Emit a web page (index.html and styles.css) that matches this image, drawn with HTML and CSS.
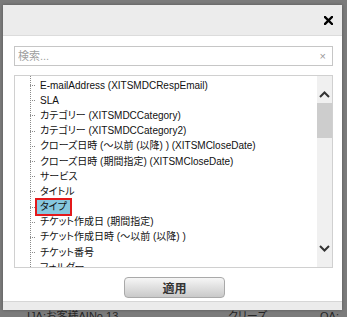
FILE: index.html
```html
<!DOCTYPE html>
<html lang="ja">
<head>
    <meta charset="UTF-8">
    <meta name="viewport" content="width=device-width, initial-scale=1.0">
    <title>フィールド選択</title>
    <link rel="stylesheet" href="styles.css">
</head>
<body>

    <!-- page behind the overlay -->
    <div class="backdrop">
        <span class="bg-cell bg-a">IJA:お客様AINo.13</span>
        <span class="bg-cell bg-b">クリーズ</span>
        <span class="bg-cell bg-c">OA:客</span>
    </div>

    <div class="dialog">
        <div class="dialog-header">
            <button class="close-btn" title="閉じる">
                <svg width="9" height="9" viewBox="0 0 9 9">
                    <path d="M1 1 L8 8 M8 1 L1 8" stroke="#000" stroke-width="2.4" stroke-linecap="square"/>
                </svg>
            </button>
        </div>

        <div class="dialog-body">
            <div class="search-box">
                <input type="text" placeholder="検索...">
                <span class="search-clear">×</span>
            </div>

            <div class="field-list">
                <ul class="tree">
                    <li><span class="label">E-mailAddress (XITSMDCRespEmail)</span></li>
                    <li><span class="label">SLA</span></li>
                    <li><span class="label">カテゴリー (XITSMDCCategory)</span></li>
                    <li><span class="label">カテゴリー (XITSMDCCategory2)</span></li>
                    <li><span class="label">クローズ日時 (～以前 (以降) ) (XITSMCloseDate)</span></li>
                    <li><span class="label">クローズ日時 (期間指定) (XITSMCloseDate)</span></li>
                    <li><span class="label">サービス</span></li>
                    <li><span class="label">タイトル</span></li>
                    <li class="selected"><span class="label">タイプ</span></li>
                    <li><span class="label">チケット作成日 (期間指定)</span></li>
                    <li><span class="label">チケット作成日時 (～以前 (以降) )</span></li>
                    <li><span class="label">チケット番号</span></li>
                    <li><span class="label">フォルダー</span></li>
                </ul>
                <div class="scrollbar">
                    <span class="scroll-arrow">
                        <svg width="11" height="7" viewBox="0 0 11 7"><path d="M1 6 L5.5 1.5 L10 6" fill="none" stroke="#333" stroke-width="2"/></svg>
                    </span>
                    <span class="scroll-thumb"></span>
                    <span class="scroll-space"></span>
                    <span class="scroll-arrow">
                        <svg width="11" height="7" viewBox="0 0 11 7"><path d="M1 1 L5.5 5.5 L10 1" fill="none" stroke="#333" stroke-width="2"/></svg>
                    </span>
                </div>
            </div>

            <div class="actions">
                <button class="apply-btn">適用</button>
            </div>
        </div>

        <div class="dialog-footer"></div>
    </div>

</body>
</html>
```

FILE: styles.css
```css
/* General Styles */
body {
    font-family: "Liberation Sans", "Noto Sans CJK JP", sans-serif;
    font-feature-settings: "palt";
    margin: 0;
    padding: 0;
    width: 347px;
    height: 317px;
    overflow: hidden;
    background-color: #7b7b7b;
    position: relative;
}

/* Page behind the overlay */
.backdrop {
    height: 317px;
    position: relative;
    overflow: hidden;
}
.bg-cell {
    position: absolute;
    top: 310px;
    font-size: 11px;
    line-height: 13px;
    color: #262626;
}
.bg-a { left: 27px; }
.bg-b { left: 228px; }
.bg-c { left: 320px; }

/* Dialog */
.dialog {
    position: absolute;
    left: 3px;
    top: 5px;
    width: 339px;
    background: #fff;
    box-shadow: 0 0 3px rgba(0, 0, 0, 0.3);
}
.dialog-header {
    height: 30px;
    background: #ececec;
    border-bottom: 1px solid #dcdcdc;
    display: flex;
    align-items: center;
    justify-content: flex-end;
    padding-right: 8px;
}
.close-btn {
    border: none;
    background: none;
    padding: 0;
    width: 11px;
    height: 11px;
    display: flex;
    align-items: center;
    justify-content: center;
    margin-top: 1px;
    cursor: pointer;
}

.dialog-body {
    padding: 10px 9px 3px 11px;
}

/* Search */
.search-box {
    height: 18px;
    border: 1px solid #c6c6c6;
    display: flex;
    align-items: center;
    padding: 0 6px 0 3px;
}
.search-box input {
    flex: 1;
    border: none;
    outline: none;
    padding: 0;
    font-family: inherit;
    font-size: 11px;
    color: #333;
}
.search-box input::placeholder {
    color: #a0a0a0;
}
.search-clear {
    color: #9a9a9a;
    font-size: 11px;
    line-height: 1;
}

/* Field tree */
.field-list {
    margin-top: 9px;
    height: 191px;
    border: 1px solid #d0d0d0;
    display: flex;
    overflow: hidden;
}
.tree {
    list-style: none;
    margin: 0;
    padding: 2px 0 0 15px;
    flex: 1;
    background-image: linear-gradient(#8a8a8a 50%, transparent 50%);
    background-size: 1px 2px;
    background-repeat: repeat-y;
    background-position: 15px 0;
}
.tree li {
    height: 15.2px;
    display: flex;
    align-items: center;
    font-size: 10px;
    color: #111;
    white-space: nowrap;
}
.tree li::before {
    content: "";
    width: 6px;
    height: 1px;
    margin-right: 1px;
    background-image: linear-gradient(90deg, #8a8a8a 50%, transparent 50%);
    background-size: 2px 1px;
}
.label {
    padding: 0 3px;
    line-height: 14px;
}
.selected .label {
    background: #86c7de;
    outline: 2px solid #e3191b;
}

/* Scrollbar */
.scrollbar {
    width: 15px;
    background: #f0f0f0;
    display: flex;
    flex-direction: column;
    align-items: center;
}
.scroll-arrow {
    height: 17px;
    display: flex;
    align-items: center;
    justify-content: center;
}
.scrollbar .scroll-arrow:first-child {
    margin-top: 10px;
}
.scroll-thumb {
    width: 15px;
    height: 35px;
    background: #cdcdcd;
}
.scroll-space {
    flex: 1;
}
.scrollbar .scroll-arrow:last-child {
    margin-bottom: 10px;
}

/* Actions */
.actions {
    display: flex;
    justify-content: center;
    margin-top: 9px;
}
.apply-btn {
    width: 101px;
    height: 21px;
    border: 1px solid #a9a9a9;
    border-radius: 4px;
    background: linear-gradient(#f6f6f6, #c9c9c9);
    font-family: inherit;
    font-size: 12px;
    font-weight: bold;
    color: #333;
    padding: 0;
    margin-left: 2px;
    cursor: pointer;
}

.dialog-footer {
    height: 8px;
    border-top: 1px solid #d6d6d6;
    background: #ebebeb;
}
```
